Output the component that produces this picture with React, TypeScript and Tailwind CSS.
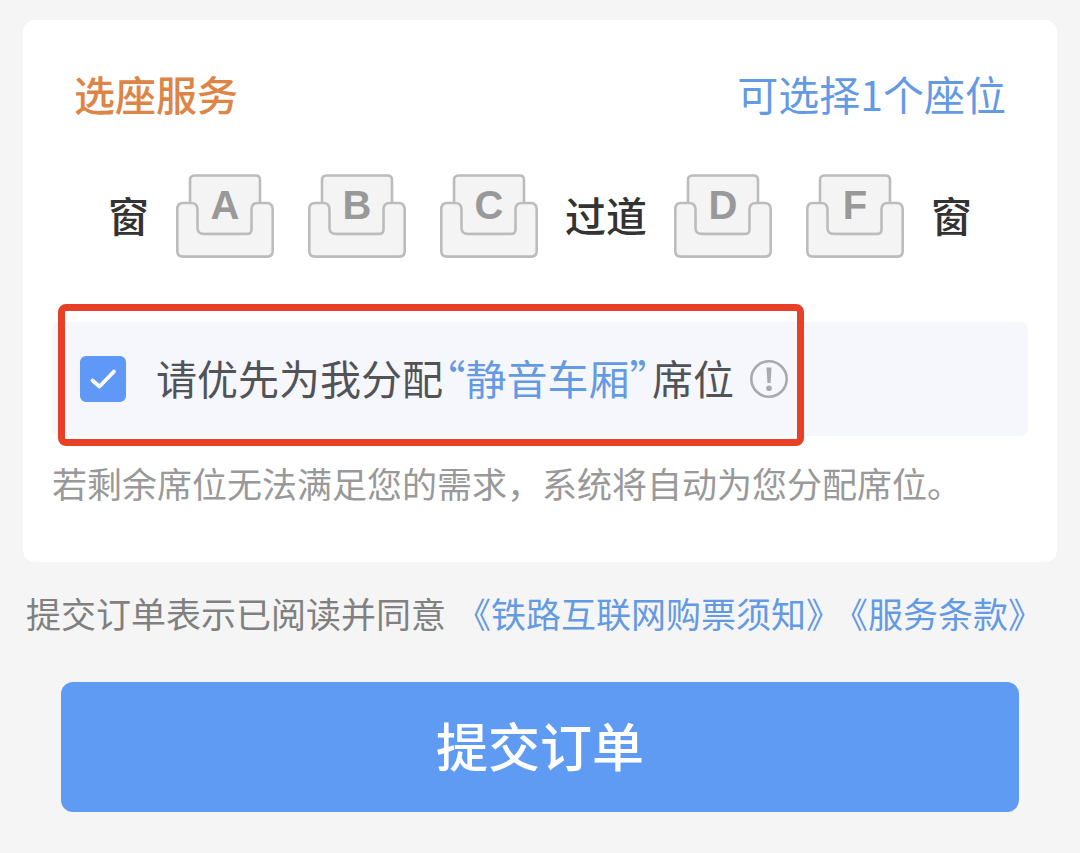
import { useState } from "react";

function Seat({ letter, selected, onSelect }: { letter: string; selected: boolean; onSelect: () => void }) {
  return (
    <button
      type="button"
      aria-label={`座位 ${letter}`}
      aria-pressed={selected}
      onClick={onSelect}
      className="relative flex h-[84px] w-[98px] shrink-0 justify-center"
    >
      <svg
        viewBox="0 0 98 84"
        className={selected ? "absolute inset-0 fill-[#dbe8fd] stroke-[#609bf3]" : "absolute inset-0 fill-[#f4f4f4] stroke-[#bcbcbc]"}
        strokeWidth="2.600"
        aria-hidden="true"
      >
        <path d="M14 60V6Q14 1.500 18.500 1.500H79.500Q84 1.500 84 6V60Z" />
        <path d="M7 29H15Q21.500 29 21.500 35.500V54Q21.500 60 28 60H71Q75.500 60 75.500 55.500V35.500Q75.500 29 82 29H90.500Q96.700 29 96.700 35.500V77Q96.700 82.600 91 82.600H7Q1.300 82.600 1.300 77V35Q1.300 29 7 29Z" />
      </svg>
      <span className="relative font-['Liberation_Sans','Noto_Sans',sans-serif] text-[40px] leading-[62px] font-bold text-[#999999]">
        {letter}
      </span>
    </button>
  );
}

export default function App() {
  const [seat, setSeat] = useState("");
  const [quiet, setQuiet] = useState(true);

  const renderSeats = (letters: string[]) => (
    <div className="flex gap-[34px]">
      {letters.map((l) => (
        <Seat key={l} letter={l} selected={seat === l} onSelect={() => setSeat(seat === l ? "" : l)} />
      ))}
    </div>
  );

  return (
    <main
      lang="zh-CN"
      className="min-h-screen bg-[#f5f5f5] px-[23px] pt-5 pb-10 font-['Noto_Sans_CJK_SC',sans-serif] text-[35px] leading-[50px] whitespace-nowrap"
    >
      <section className="rounded-xl bg-white px-[29px] pt-[43px] pb-[54px]">
        <header className="flex items-center justify-between px-[22px] text-[41px] leading-[60px]">
          <h1 className="font-medium text-[#dd8447]">选座服务</h1>
          <p className="text-[#649ae3]">可选择1个座位</p>
        </header>

        <div className="mt-[51px] flex items-center justify-center gap-[27px] text-[41px] leading-[60px] font-medium text-[#333333]">
          <span className="pb-1">窗</span>
          {renderSeats(["A", "B", "C"])}
          <span className="pb-1">过道</span>
          {renderSeats(["D", "F"])}
          <span className="pb-1">窗</span>
        </div>

        <div className="mt-16 flex h-[114px] items-center rounded-lg bg-[#f6f7fc]">
          <div className="relative flex h-full items-center gap-4 px-7 text-[41px] leading-[60px]">
            <label className="flex items-center gap-[30px] text-[#525356]">
              <span className="relative flex">
                <input
                  type="checkbox"
                  checked={quiet}
                  onChange={(e) => setQuiet(e.target.checked)}
                  className="size-[46px] appearance-none rounded-md border-2 border-[#5f98f6] bg-white checked:bg-[#5f98f6]"
                />
                {quiet && (
                  <svg viewBox="0 0 46 46" className="pointer-events-none absolute inset-0" fill="none" stroke="#ffffff" strokeWidth="3.800" strokeLinecap="round" strokeLinejoin="round" aria-hidden="true">
                    <path d="M12.500 24.500L19.500 30.500L34 15.500" />
                  </svg>
                )}
              </span>
              <span className="pb-1">
                请优先为我分配
                <span className="mx-0.5 text-[#649ae3] [font-feature-settings:'halt']">“静音车厢”</span>
                席位
              </span>
            </label>
            <button type="button" aria-label="静音车厢说明">
              <svg viewBox="0 0 38 38" className="size-[38px]" fill="none" stroke="#a9aaad" aria-hidden="true">
                <circle cx="19" cy="19" r="17.700" strokeWidth="2.600" />
                <path d="M16.500 7.500H21.500L20.600 23H17.400Z" fill="#a9aaad" stroke="none" />
                <circle cx="19" cy="28.300" r="2.800" fill="#a9aaad" stroke="none" />
              </svg>
            </button>
            <div className="pointer-events-none absolute -top-[18px] right-3 -bottom-[10px] left-1.5 rounded-lg border-[7px] border-[#e83f27]" />
          </div>
        </div>

        <p className="mt-[22px] text-[#999999]">若剩余席位无法满足您的需求，系统将自动为您分配席位。</p>
      </section>

      <div className="mt-[26px] flex px-[3px] text-[#808080]">
        <span className="mr-2.5">提交订单表示已阅读并同意</span>
        <a href="#ticket-notice" className="text-[#649ae3]">《铁路互联网购票须知》</a>
        <a href="#terms" className="-ml-2 text-[#649ae3]">《服务条款》</a>
      </div>

      <div className="mt-11 px-[38px]">
        <button type="button" className="h-[130px] w-full rounded-xl bg-[#609bf3] pb-1 text-[52px] font-medium text-white">
          提交订单
        </button>
      </div>
    </main>
  );
}
